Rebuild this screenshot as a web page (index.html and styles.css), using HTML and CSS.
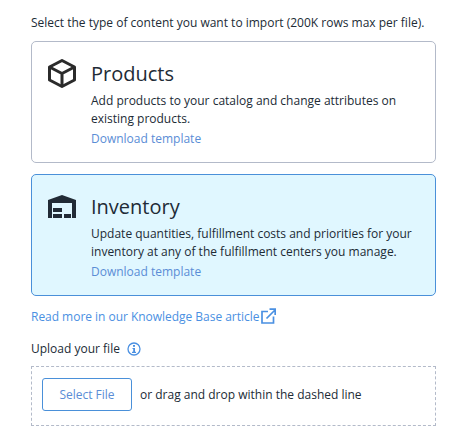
FILE: index.html
```html
<!DOCTYPE html>
<html lang="en">
<head>
    <meta charset="UTF-8">
    <title>Import</title>
    <link rel="stylesheet" href="styles.css">
</head>
<body>
    <div class="import-panel">
        <p class="intro">Select the type of content you want to import (200K rows max per file).</p>

        <div class="type-card">
            <svg class="type-icon" width="28" height="29" viewBox="0 0 28 29" fill="none" stroke="#2b2b2b" stroke-width="3" stroke-linejoin="round">
                <path d="M14 1.5 26.5 8V21L14 27.5 1.5 21V8Z"/>
                <path d="M1.5 8 14 14.5 26.5 8M14 14.5V27.5"/>
            </svg>
            <div class="type-body">
                <h2>Products</h2>
                <p>Add products to your catalog and change attributes on existing products.</p>
                <a href="#">Download template</a>
            </div>
        </div>

        <div class="type-card selected">
            <svg class="type-icon warehouse" width="28" height="23" viewBox="0 0 28 23" fill="#212b36">
                <path d="M0 23V5L14 0 28 5V23H24V8H4V23Z"/>
                <rect x="5" y="13" width="9" height="4"/>
                <rect x="5" y="19" width="9" height="4"/>
                <rect x="16" y="19" width="7" height="4"/>
            </svg>
            <div class="type-body">
                <h2>Inventory</h2>
                <p>Update quantities, fulfillment costs and priorities for your inventory at any of the fulfillment centers you manage.</p>
                <a href="#">Download template</a>
            </div>
        </div>

        <a class="kb-link" href="#">Read more in our Knowledge Base article
            <svg class="kb-icon" width="15" height="16" viewBox="0 0 15 16" fill="none" stroke="#4a90e2" stroke-width="1.7">
                <path d="M7 3.5H1V15H12.5V8.5"/>
                <path d="M5.5 10.5 14 2M8.5 1.2H14.2V7"/>
            </svg>
        </a>

        <div class="upload-label">
            <span>Upload your file</span>
            <svg width="14" height="14" viewBox="0 0 14 14" fill="none">
                <circle cx="7" cy="7" r="6" stroke="#4a90e2" stroke-width="1.3"/>
                <rect x="6" y="3" width="2" height="1.8" fill="#4a90e2"/>
                <path d="M5.5 6H8V9.8H9V11H5V9.8H6.2V7H5.5Z" fill="#4a90e2"/>
            </svg>
        </div>

        <div class="drop-zone">
            <button>Select File</button>
            <span>or drag and drop within the dashed line</span>
        </div>
    </div>
</body>
</html>
```

FILE: styles.css
```css
body {
    margin: 0;
    font-family: "Open Sans", "Noto Sans", sans-serif;
    font-size: 12px;
    color: #212b36;
    background-color: white;
}
.import-panel {
    width: 405px;
    padding: 14px 0 0 31px;
}
.intro {
    margin: 0 0 9px;
    line-height: 18px;
}
.type-card {
    display: flex;
    gap: 15px;
    box-sizing: border-box;
    height: 122px;
    margin-bottom: 11px;
    padding: 17px 16px;
    border: 1px solid #b3bac9;
    border-radius: 5px;
}
.type-card.selected {
    background-color: #e0f7ff;
    border-color: #4a90d9;
}
.type-icon {
    flex-shrink: 0;
}
.type-icon.warehouse {
    margin-top: 3px;
}
.type-body h2 {
    margin: 0 0 3px;
    font-size: 20px;
    font-weight: 400;
    line-height: 30px;
}
.type-body p {
    margin: 0;
    line-height: 18px;
}
.type-body a {
    display: block;
    margin-top: 2px;
    line-height: 18px;
    color: #5a8dd6;
    text-decoration: none;
}
.kb-link {
    display: flex;
    align-items: center;
    gap: 2px;
    margin-top: 9px;
    line-height: 20px;
    letter-spacing: -0.03px;
    color: #4a90e2;
    text-decoration: none;
}
.kb-icon {
    margin-top: -2px;
}
.upload-label {
    display: flex;
    align-items: center;
    gap: 7px;
    margin-top: 13px;
    line-height: 18px;
}
.drop-zone {
    display: flex;
    align-items: center;
    gap: 8px;
    box-sizing: border-box;
    height: 60px;
    margin-top: 8px;
    padding: 0 0 4px 10px;
    border: 1px dashed #b3bac9;
}
button {
    width: 90px;
    height: 33px;
    padding: 0;
    font-family: inherit;
    font-size: 12px;
    color: #5a8dd6;
    background-color: white;
    border: 1px solid #4a90d9;
    border-radius: 3px;
}
```
